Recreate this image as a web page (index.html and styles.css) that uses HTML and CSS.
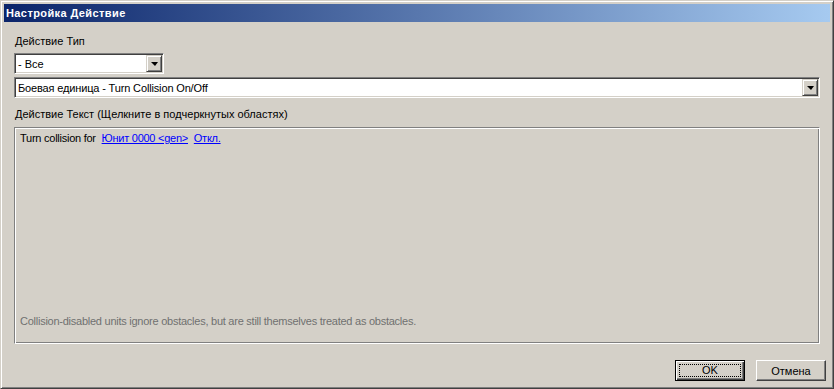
FILE: index.html
```html
<!DOCTYPE html>
<html lang="ru">
<head>
    <meta charset="UTF-8">
    <title>Настройка Действие</title>
    <link rel="stylesheet" href="styles.css">
</head>
<body>
    <div class="window">
        <div class="titlebar">Настройка Действие</div>
        <div class="content">
            <div class="label">Действие Тип</div>
            <div class="combo small">
                <span class="combo-text">- Все</span>
                <span class="combo-btn"><span class="arrow"></span></span>
            </div>
            <div class="combo wide">
                <span class="combo-text">Боевая единица - Turn Collision On/Off</span>
                <span class="combo-btn"><span class="arrow"></span></span>
            </div>
            <div class="label second">Действие Текст (Щелкните в подчеркнутых областях)</div>
            <div class="textbox">
                <div class="action-line">Turn collision for <a href="#">Юнит 0000 &lt;gen&gt;</a> <a href="#">Откл.</a></div>
                <div class="hint">Collision-disabled units ignore obstacles, but are still themselves treated as obstacles.</div>
            </div>
        </div>
        <div class="buttons">
            <button class="button default"><span class="focus">OK</span></button>
            <button class="button">Отмена</button>
        </div>
    </div>
</body>
</html>
```

FILE: styles.css
```css
body {
    margin: 0;
    background-color: #d4d0c8;
    font-family: "Liberation Sans", Arial, sans-serif;
    font-size: 11px;
    color: #000000;
}
.window {
    width: 834px;
    height: 389px;
    box-sizing: border-box;
    background-color: #d4d0c8;
    border-top: 1px solid #d4d0c8;
    border-left: 1px solid #d4d0c8;
    border-right: 1px solid #404040;
    border-bottom: 1px solid #404040;
    box-shadow: inset 1px 1px 0 #ffffff, inset -1px -1px 0 #808080;
    padding: 3px;
    display: flex;
    flex-direction: column;
}
.titlebar {
    height: 18px;
    line-height: 18px;
    padding-left: 2px;
    font-weight: bold;
    letter-spacing: 0.4px;
    color: #ffffff;
    background: linear-gradient(to right, #0a246a, #a6caf0);
}
.content {
    padding: 0 10px 0 10px;
    flex: 1;
}
.label {
    margin-top: 13px;
    padding-left: 1px;
    height: 13px;
    line-height: 13px;
}
.label.second {
    margin-top: 10px;
}
.combo {
    height: 21px;
    box-sizing: border-box;
    background-color: #ffffff;
    border-top: 1px solid #808080;
    border-left: 1px solid #808080;
    border-right: 1px solid #ffffff;
    border-bottom: 1px solid #ffffff;
    box-shadow: inset 1px 1px 0 #404040, inset -1px -1px 0 #d4d0c8;
    display: flex;
    align-items: center;
    justify-content: space-between;
    margin-top: 4px;
}
.combo.small {
    width: 150px;
    margin-top: 5px;
}
.combo.wide {
    width: 806px;
    margin-top: 3px;
    letter-spacing: -0.15px;
}
.combo-text {
    padding-left: 3px;
}
.combo-btn {
    width: 16px;
    height: 17px;
    box-sizing: border-box;
    margin-right: 1px;
    background-color: #d4d0c8;
    border-top: 1px solid #d4d0c8;
    border-left: 1px solid #d4d0c8;
    border-right: 1px solid #404040;
    border-bottom: 1px solid #404040;
    box-shadow: inset 1px 1px 0 #ffffff, inset -1px -1px 0 #808080;
    display: flex;
    align-items: center;
    justify-content: center;
}
.arrow {
    width: 0;
    height: 0;
    border-left: 4px solid transparent;
    border-right: 3px solid transparent;
    border-top: 4px solid #000000;
    margin-top: 1px;
}
.textbox {
    margin-top: 6px;
    width: 806px;
    height: 217px;
    box-sizing: border-box;
    border: 1px solid #808080;
    border-right-color: #ffffff;
    border-bottom-color: #ffffff;
    box-shadow: inset 1px 1px 0 #ffffff, inset -1px -1px 0 #808080;
    padding: 4px 5px 6px 5px;
    display: flex;
    flex-direction: column;
    justify-content: space-between;
}
.action-line {
    line-height: 13px;
    letter-spacing: -0.25px;
}
.action-line a {
    color: #0000ff;
    margin-left: 3px;
}
.hint {
    color: #707070;
    line-height: 13px;
    letter-spacing: -0.25px;
    margin-bottom: 9px;
}
.buttons {
    display: flex;
    justify-content: flex-end;
    gap: 11px;
    padding: 0 4px 4px 0;
}
.button {
    width: 70px;
    height: 21px;
    box-sizing: border-box;
    font-family: inherit;
    font-size: 11px;
    background-color: #d4d0c8;
    border-top: 1px solid #ffffff;
    border-left: 1px solid #ffffff;
    border-right: 1px solid #404040;
    border-bottom: 1px solid #404040;
    box-shadow: inset -1px -1px 0 #808080;
    padding: 0;
    color: #000000;
}
.button.default {
    border: 1px solid #000000;
    box-shadow: inset 1px 1px 0 #ffffff, inset -1px -1px 0 #404040, inset -2px -2px 0 #808080;
    padding: 3px;
}
.focus {
    display: block;
    height: 100%;
    box-sizing: border-box;
    border: 1px dotted #000000;
    line-height: 11px;
}
```
